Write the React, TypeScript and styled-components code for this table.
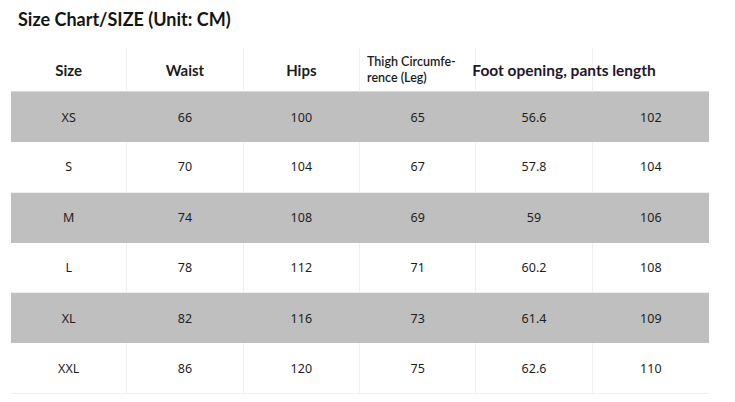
import React from "react";
import styled, { createGlobalStyle } from "styled-components";

const Global = createGlobalStyle`
  html, body { margin: 0; padding: 0; background: #ffffff; }
  body { width: 735px; height: 402px; overflow: hidden; }
`;

const Page = styled.div`
  width: 735px;
  height: 402px;
  display: flex;
  flex-direction: column;
  background: #fff;
`;

const Title = styled.h1`
  margin: 0;
  padding: 7px 0 0 18px;
  height: 48px;
  box-sizing: border-box;
  font-family: Lato, "Liberation Sans", sans-serif;
  font-weight: 700;
  font-size: 18px;
  line-height: 24px;
  color: #151515;
`;

const Table = styled.div`
  margin-left: 11px;
  width: 698px;
  display: grid;
  grid-template-columns: repeat(6, minmax(0, 1fr));
`;

const HeadCell = styled.div<{ $align?: "left" | "center"; $last?: boolean }>`
  height: 43px;
  border-right: ${(p) => (p.$last ? "none" : "1px solid #f0f0f0")};
  border-bottom: 1px solid #d6d6d6;
  display: flex;
  align-items: center;
  justify-content: ${(p) => (p.$align === "left" ? "flex-start" : "center")};
  font-family: Lato, "Liberation Sans", sans-serif;
  font-weight: 700;
  font-size: 15px;
  color: #1c1c1c;
  white-space: nowrap;
  overflow: visible;
  position: relative;
  z-index: 1;
  min-width: 0;
`;

const SmallHead = styled.span`
  font-size: 12.5px;
  line-height: 16px;
  font-weight: 600;
  white-space: normal;
  padding-left: 7px;
  color: #1c1c1c;
`;

const WideHead = styled.span`
  font-size: 15.5px;
  margin-left: -4px;
  margin-top: 1px;
  color: #23172c;
`;

const Cell = styled.div<{ $shade: boolean; $last?: boolean }>`
  height: 50.3px;
  background: ${(p) => (p.$shade ? "#bfbfbf" : "#ffffff")};
  border-right: ${(p) =>
    p.$last ? "none" : p.$shade ? "1px solid #bfbfbf" : "1px solid #f0f0f0"};
  border-bottom: ${(p) => (p.$shade ? "none" : "1px solid #efefef")};
  box-sizing: border-box;
  display: flex;
  align-items: center;
  justify-content: center;
  font-family: "Noto Sans", "Open Sans", sans-serif;
  font-size: 12.5px;
  color: #1e1e1e;
`;

const rows: string[][] = [
  ["XS", "66", "100", "65", "56.6", "102"],
  ["S", "70", "104", "67", "57.8", "104"],
  ["M", "74", "108", "69", "59", "106"],
  ["L", "78", "112", "71", "60.2", "108"],
  ["XL", "82", "116", "73", "61.4", "109"],
  ["XXL", "86", "120", "75", "62.6", "110"],
];

export default function App() {
  return (
    <Page>
      <Global />
      <Title>Size Chart/SIZE (Unit: CM)</Title>
      <Table>
        <HeadCell>Size</HeadCell>
        <HeadCell>Waist</HeadCell>
        <HeadCell>Hips</HeadCell>
        <HeadCell $align="left">
          <SmallHead>
            Thigh Circumfe-
            <br />
            rence (Leg)
          </SmallHead>
        </HeadCell>
        <HeadCell $align="left">
          <WideHead>Foot opening, pants length</WideHead>
        </HeadCell>
        <HeadCell $last />
        {rows.map((r, i) =>
          r.map((v, j) => (
            <Cell key={`${i}-${j}`} $shade={i % 2 === 0} $last={j === 5}>
              {v}
            </Cell>
          ))
        )}
      </Table>
    </Page>
  );
}
